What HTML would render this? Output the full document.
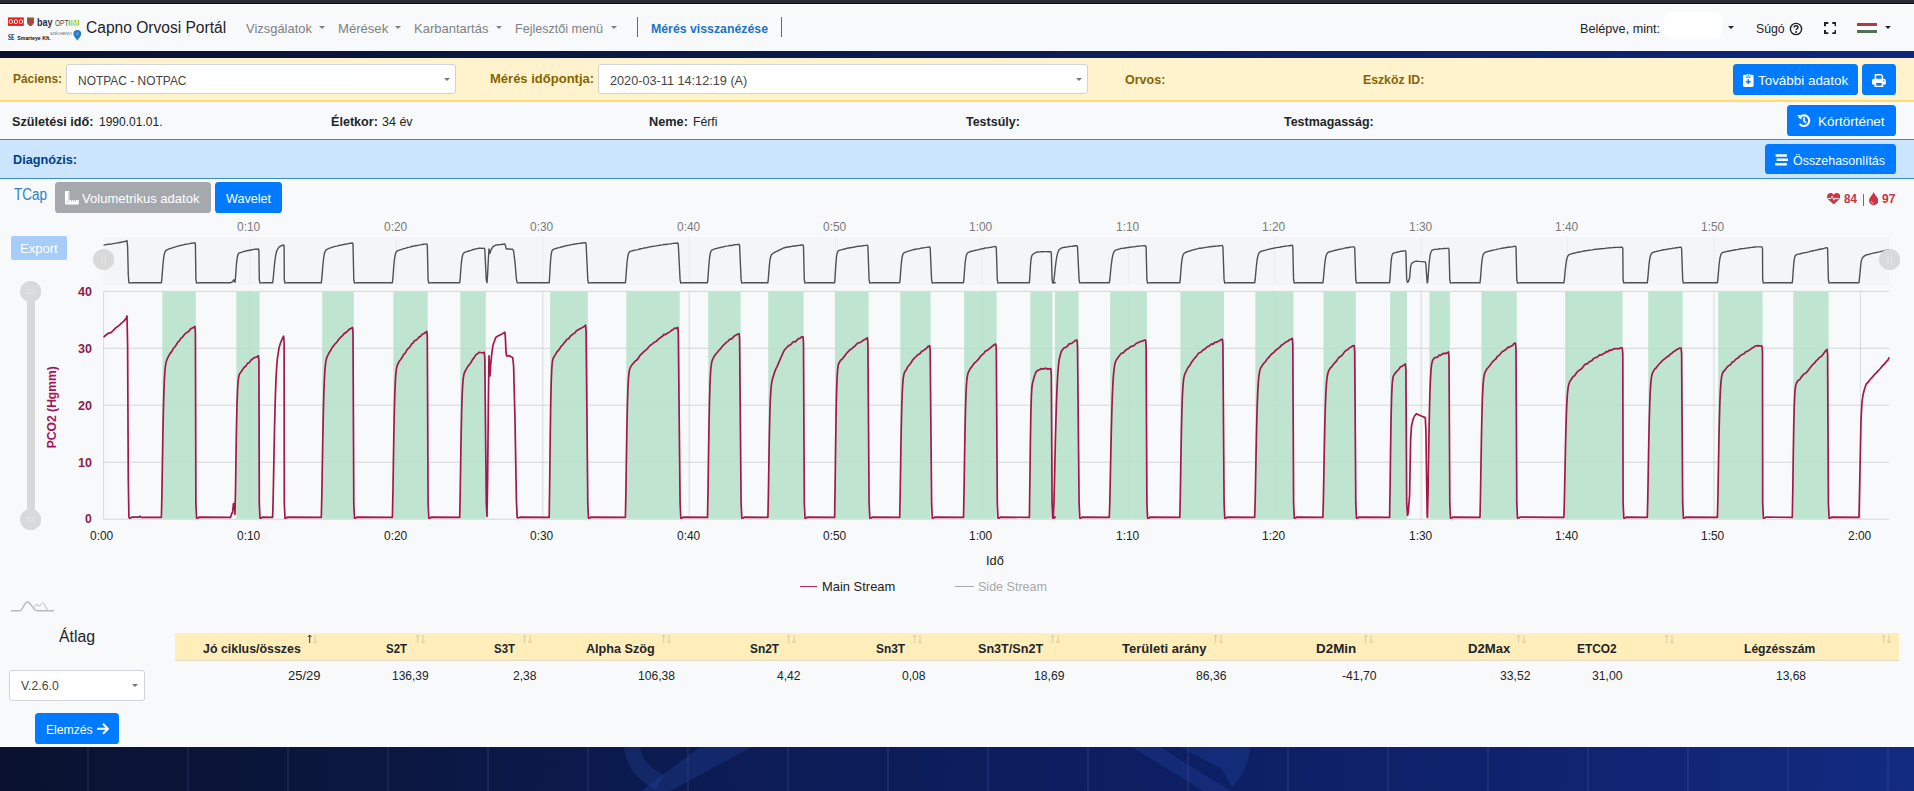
<!DOCTYPE html>
<html lang="hu">
<head>
<meta charset="utf-8">
<title>Capno Orvosi Portál</title>
<style>
*{box-sizing:border-box;margin:0;padding:0}
html,body{width:1914px;height:791px;overflow:hidden}
body{font-family:"Liberation Sans",sans-serif;background:#0d1f5c;position:relative;color:#212529;font-size:13px}
.abs{position:absolute;white-space:nowrap}
.t{position:absolute;white-space:nowrap;line-height:1;transform-origin:0 0}
b,.b{font-weight:bold}
#topbar{left:0;top:0;width:1914px;height:4px;background:linear-gradient(#2b2b36 0,#2b2b36 70%,#05050a 78%,#05050a 100%)}
#nav{left:0;top:4px;width:1914px;height:47px;background:#f8f9fa;border-top:1px solid #fff}
#darkband{left:0;top:51px;width:1914px;height:6.6px;background:linear-gradient(90deg,#0a1230 0%,#0b1740 30%,#0d1f5c 65%,#10267a 100%)}
#yel{left:0;top:57.6px;width:1914px;height:44.2px;background:#fff3cd;border-bottom:2.4px solid #ffdc73}
#info{left:0;top:101.8px;width:1914px;height:37px;background:#f8f9fa}
#blue{left:0;top:139px;width:1914px;height:40px;background:#cce5ff;border-top:1px solid #3d8fb5;border-bottom:1px solid #3d8fb5}
#main{left:0;top:179px;width:1914px;height:568px;background:#f8f9fa}
#foot{left:0;top:746.7px;width:1914px;height:44.3px;background:linear-gradient(90deg,#0a1230 0%,#0b1740 20%,#0c1c56 40%,#0d1f62 60%,#0f236e 80%,#122a80 100%);overflow:hidden}
.btn{position:absolute;background:#007bff;color:#fff;border-radius:3.6px;white-space:nowrap}
.sel{position:absolute;background:#fff;border:1px solid #ced4da;border-radius:3px}
.caret{position:absolute;width:0;height:0;border-left:3px solid transparent;border-right:3px solid transparent;border-top:3.5px solid #777}
</style>
</head>
<body>
<div class="abs" id="topbar"></div>
<div class="abs" id="nav"></div>
<div class="abs" id="darkband"></div>
<div class="abs" id="yel"></div>
<div class="abs" id="info"></div>
<div class="abs" id="blue"></div>
<div class="abs" id="main"></div>
<div class="abs" id="foot"><svg width="1914" height="45" viewBox="0 0 1914 45">
<g stroke="#8fa0e0" stroke-opacity=".13" stroke-width="1.6"><path d="M88 0V45"/><path d="M188 0V45"/><path d="M288 0V45"/><path d="M388 0V45"/><path d="M488 0V45"/><path d="M588 0V45"/><path d="M688 0V45"/><path d="M788 0V45"/><path d="M888 0V45"/><path d="M988 0V45"/><path d="M1088 0V45"/><path d="M1188 0V45"/><path d="M1288 0V45"/><path d="M1388 0V45"/><path d="M1488 0V45"/><path d="M1588 0V45"/><path d="M1688 0V45"/><path d="M1788 0V45"/><path d="M1888 0V45"/></g>
<g fill="#2a55c0" fill-opacity=".22"><path d="M700 0H752L668 45H640Z"/><path d="M624 0H640C642 12 650 22 664 28L656 42C636 34 626 18 624 0Z"/>
<path d="M1132 0H1160L1232 45H1205Z"/><path d="M1180 0H1250C1250 12 1244 28 1232 40L1222 22C1210 16 1196 8 1180 0Z"/></g>
</svg></div>
<svg class="abs" style="left:0;top:0" width="1914" height="791" viewBox="0 0 1914 791">
<rect x="103.6" y="237" width="1785.4" height="48" fill="#f4f5f7"/>
<line x1="103.6" x2="1889" y1="291.3" y2="291.3" stroke="#000" stroke-opacity="0.14" stroke-width="1"/>
<line x1="103.6" x2="1889" y1="348.3" y2="348.3" stroke="#000" stroke-opacity="0.14" stroke-width="1"/>
<line x1="103.6" x2="1889" y1="405.2" y2="405.2" stroke="#000" stroke-opacity="0.14" stroke-width="1"/>
<line x1="103.6" x2="1889" y1="462.2" y2="462.2" stroke="#000" stroke-opacity="0.14" stroke-width="1"/>
<line x1="103.6" x2="1889" y1="519.2" y2="519.2" stroke="#000" stroke-opacity="0.14" stroke-width="1"/>
<line x1="103.6" x2="103.6" y1="291.3" y2="519.2" stroke="#000" stroke-opacity="0.12" stroke-width="1"/>
<line x1="250.0" x2="250.0" y1="291.3" y2="519.2" stroke="#000" stroke-opacity="0.12" stroke-width="1"/>
<line x1="250.0" x2="250.0" y1="237" y2="284.5" stroke="#000" stroke-opacity="0.04" stroke-width="1"/>
<line x1="396.4" x2="396.4" y1="291.3" y2="519.2" stroke="#000" stroke-opacity="0.12" stroke-width="1"/>
<line x1="396.4" x2="396.4" y1="237" y2="284.5" stroke="#000" stroke-opacity="0.04" stroke-width="1"/>
<line x1="542.8" x2="542.8" y1="291.3" y2="519.2" stroke="#000" stroke-opacity="0.12" stroke-width="1"/>
<line x1="542.8" x2="542.8" y1="237" y2="284.5" stroke="#000" stroke-opacity="0.04" stroke-width="1"/>
<line x1="689.2" x2="689.2" y1="291.3" y2="519.2" stroke="#000" stroke-opacity="0.12" stroke-width="1"/>
<line x1="689.2" x2="689.2" y1="237" y2="284.5" stroke="#000" stroke-opacity="0.04" stroke-width="1"/>
<line x1="835.6" x2="835.6" y1="291.3" y2="519.2" stroke="#000" stroke-opacity="0.12" stroke-width="1"/>
<line x1="835.6" x2="835.6" y1="237" y2="284.5" stroke="#000" stroke-opacity="0.04" stroke-width="1"/>
<line x1="982.0" x2="982.0" y1="291.3" y2="519.2" stroke="#000" stroke-opacity="0.12" stroke-width="1"/>
<line x1="982.0" x2="982.0" y1="237" y2="284.5" stroke="#000" stroke-opacity="0.04" stroke-width="1"/>
<line x1="1128.4" x2="1128.4" y1="291.3" y2="519.2" stroke="#000" stroke-opacity="0.12" stroke-width="1"/>
<line x1="1128.4" x2="1128.4" y1="237" y2="284.5" stroke="#000" stroke-opacity="0.04" stroke-width="1"/>
<line x1="1274.8" x2="1274.8" y1="291.3" y2="519.2" stroke="#000" stroke-opacity="0.12" stroke-width="1"/>
<line x1="1274.8" x2="1274.8" y1="237" y2="284.5" stroke="#000" stroke-opacity="0.04" stroke-width="1"/>
<line x1="1421.2" x2="1421.2" y1="291.3" y2="519.2" stroke="#000" stroke-opacity="0.12" stroke-width="1"/>
<line x1="1421.2" x2="1421.2" y1="237" y2="284.5" stroke="#000" stroke-opacity="0.04" stroke-width="1"/>
<line x1="1567.6" x2="1567.6" y1="291.3" y2="519.2" stroke="#000" stroke-opacity="0.12" stroke-width="1"/>
<line x1="1567.6" x2="1567.6" y1="237" y2="284.5" stroke="#000" stroke-opacity="0.04" stroke-width="1"/>
<line x1="1714.0" x2="1714.0" y1="291.3" y2="519.2" stroke="#000" stroke-opacity="0.12" stroke-width="1"/>
<line x1="1714.0" x2="1714.0" y1="237" y2="284.5" stroke="#000" stroke-opacity="0.04" stroke-width="1"/>
<line x1="1860.4" x2="1860.4" y1="291.3" y2="519.2" stroke="#000" stroke-opacity="0.12" stroke-width="1"/>
<rect x="162.3" y="291.8" width="33.5" height="227" fill="#b6e2ca" fill-opacity=".86"/>
<rect x="236.3" y="291.8" width="23.3" height="227" fill="#b6e2ca" fill-opacity=".86"/>
<rect x="322.2" y="291.8" width="31.6" height="227" fill="#b6e2ca" fill-opacity=".86"/>
<rect x="393.3" y="291.8" width="34.4" height="227" fill="#b6e2ca" fill-opacity=".86"/>
<rect x="460.3" y="291.8" width="25.6" height="227" fill="#b6e2ca" fill-opacity=".86"/>
<rect x="550.2" y="291.8" width="37.6" height="227" fill="#b6e2ca" fill-opacity=".86"/>
<rect x="626.3" y="291.8" width="53.4" height="227" fill="#b6e2ca" fill-opacity=".86"/>
<rect x="708.2" y="291.8" width="32.5" height="227" fill="#b6e2ca" fill-opacity=".86"/>
<rect x="768.2" y="291.8" width="35.4" height="227" fill="#b6e2ca" fill-opacity=".86"/>
<rect x="835.2" y="291.8" width="33.5" height="227" fill="#b6e2ca" fill-opacity=".86"/>
<rect x="900.3" y="291.8" width="30.3" height="227" fill="#b6e2ca" fill-opacity=".86"/>
<rect x="964.1" y="291.8" width="32.5" height="227" fill="#b6e2ca" fill-opacity=".86"/>
<rect x="1030.3" y="291.8" width="22.1" height="227" fill="#b6e2ca" fill-opacity=".86"/>
<rect x="1055.0" y="291.8" width="23.6" height="227" fill="#b6e2ca" fill-opacity=".86"/>
<rect x="1110.2" y="291.8" width="36.7" height="227" fill="#b6e2ca" fill-opacity=".86"/>
<rect x="1180.4" y="291.8" width="43.6" height="227" fill="#b6e2ca" fill-opacity=".86"/>
<rect x="1255.3" y="291.8" width="38.2" height="227" fill="#b6e2ca" fill-opacity=".86"/>
<rect x="1323.5" y="291.8" width="32.3" height="227" fill="#b6e2ca" fill-opacity=".86"/>
<rect x="1390.2" y="291.8" width="16.8" height="227" fill="#b6e2ca" fill-opacity=".86"/>
<rect x="1429.4" y="291.8" width="20.5" height="227" fill="#b6e2ca" fill-opacity=".86"/>
<rect x="1481.4" y="291.8" width="35.4" height="227" fill="#b6e2ca" fill-opacity=".86"/>
<rect x="1565.1" y="291.8" width="57.5" height="227" fill="#b6e2ca" fill-opacity=".86"/>
<rect x="1648.2" y="291.8" width="34.5" height="227" fill="#b6e2ca" fill-opacity=".86"/>
<rect x="1718.1" y="291.8" width="44.5" height="227" fill="#b6e2ca" fill-opacity=".86"/>
<rect x="1793.3" y="291.8" width="35.4" height="227" fill="#b6e2ca" fill-opacity=".86"/>
<path d="M103.6 245.1L106.0 244.6L108.5 244.2L111.0 244.1L113.5 243.6L116.0 243.1L118.5 242.7L121.0 242.2L123.5 241.8L126.0 241.2L127.0 240.6L127.6 246.7L128.3 275.0L128.9 282.7L129.6 283.0L131.0 282.9L132.0 282.8L139.0 282.8L140.0 282.6L141.0 282.8L161.4 282.8L161.9 278.3L162.4 271.6L162.9 265.3L163.4 260.2L163.9 256.4L164.4 253.9L164.9 252.2L165.4 251.2L165.9 250.5L166.4 250.1L166.9 249.8L168.6 249.1L170.1 248.5L171.7 248.1L173.2 247.5L174.8 247.1L176.3 246.6L177.8 246.1L179.4 245.8L180.9 245.3L182.5 245.1L184.1 244.6L185.6 244.3L187.2 244.1L188.7 243.9L190.2 243.4L191.8 243.2L193.3 243.1L194.9 242.8L195.4 244.1L195.9 279.9L196.6 283.0L198.0 282.9L199.0 282.8L230.5 282.8L231.8 282.0L232.6 281.8L233.4 280.0L233.8 281.1L234.4 279.9L235.0 282.2L235.5 277.5L236.0 270.2L236.5 263.8L237.0 259.2L237.5 256.3L238.0 254.6L238.5 253.6L239.0 253.1L239.5 252.8L241.3 252.3L242.8 251.8L244.4 251.3L245.9 251.1L247.5 250.5L249.0 250.5L250.6 250.0L252.2 249.7L253.7 249.4L255.3 249.3L256.8 249.2L258.4 249.0L258.9 250.2L259.3 279.9L260.0 283.0L261.4 282.9L262.4 282.8L272.6 282.8L273.1 279.5L273.6 274.1L274.1 268.5L274.6 263.5L275.1 259.3L275.6 255.9L276.1 253.4L276.6 251.6L277.1 250.2L277.6 249.2L279.1 247.2L280.6 246.2L282.1 245.5L283.6 244.9L284.1 246.1L284.3 279.9L285.0 283.0L286.4 282.9L287.4 282.8L321.3 282.8L321.8 278.7L322.3 272.4L322.8 266.2L323.3 261.0L323.8 257.0L324.3 254.2L324.8 252.3L325.3 251.1L325.8 250.3L326.3 249.7L326.8 249.3L327.3 249.1L328.9 248.4L330.4 247.9L332.0 247.3L333.6 246.8L335.2 246.4L336.8 246.1L338.3 245.7L339.9 245.2L341.5 245.0L343.1 244.6L344.6 244.2L346.2 244.1L347.8 243.8L349.4 243.4L350.9 243.2L352.5 243.0L353.0 244.3L353.8 279.9L354.5 283.0L355.9 282.9L356.9 282.8L392.4 282.8L392.9 278.1L393.4 271.2L393.9 264.8L394.4 259.8L394.9 256.3L395.4 254.1L395.9 252.6L396.4 251.8L396.9 251.2L397.4 250.9L399.2 250.1L400.8 249.7L402.3 249.2L403.8 248.6L405.4 248.4L406.9 247.7L408.4 247.4L410.0 247.1L411.5 246.5L413.0 246.3L414.5 245.8L416.1 245.7L417.6 245.4L419.1 245.1L420.7 244.9L422.2 244.5L423.7 244.3L425.3 244.1L426.8 243.9L427.3 245.1L428.1 279.9L428.8 283.0L430.2 282.9L431.2 282.8L459.7 282.8L460.2 278.0L460.7 271.0L461.2 264.8L461.7 260.1L462.2 257.0L462.7 255.0L463.2 253.8L463.7 253.1L464.2 252.7L464.7 252.4L466.3 251.8L467.9 251.2L469.5 250.8L471.1 250.3L472.6 249.7L474.2 249.3L475.8 248.8L477.4 248.6L479.0 248.2L480.8 248.3L482.5 248.4L484.3 248.2L484.8 249.5L486.3 279.9L487.0 282.6L487.6 275.0L488.4 258.2L489.0 249.0L489.5 251.5L490.0 253.2L490.6 251.1L491.5 249.0L493.0 246.7L495.7 245.1L498.0 244.8L501.0 244.5L504.8 244.0L505.4 245.2L506.0 248.2L506.6 249.0L509.0 248.9L511.0 249.2L512.7 249.3L513.6 251.1L515.0 262.4L516.4 279.2L517.2 282.9L518.5 282.9L520.0 282.8L549.2 282.8L549.7 275.7L550.2 266.5L550.7 259.2L551.2 254.5L551.7 251.9L552.2 250.5L552.7 249.8L553.2 249.5L554.8 248.9L556.4 248.3L557.9 247.9L559.5 247.6L561.0 247.0L562.5 246.7L564.1 246.3L565.6 245.9L567.1 245.5L568.7 245.4L570.2 244.9L571.8 244.6L573.3 244.3L574.8 244.2L576.4 243.7L577.9 243.6L579.4 243.4L581.0 243.2L582.5 243.0L584.1 242.8L585.6 242.6L586.1 243.8L587.8 279.9L588.5 283.0L589.9 282.9L590.9 282.8L625.4 282.8L625.9 277.7L626.4 270.5L626.9 264.0L627.4 259.2L627.9 255.9L628.4 253.9L628.9 252.7L629.4 252.0L629.9 251.6L630.4 251.4L631.9 250.9L633.5 250.5L635.0 250.1L636.5 249.9L638.0 249.6L639.6 249.0L641.1 248.7L642.6 248.4L644.2 248.0L645.7 247.8L647.2 247.5L648.7 247.1L650.3 246.7L651.8 246.6L653.3 246.3L654.9 246.1L656.4 245.9L657.9 245.6L659.5 245.3L661.0 245.1L662.5 244.9L664.0 244.5L665.6 244.5L667.1 244.3L668.6 244.1L670.2 243.9L671.7 243.6L673.2 243.4L674.7 243.2L676.3 243.2L677.8 243.0L678.3 244.3L680.1 279.9L680.8 283.0L682.2 282.9L683.2 282.8L707.5 282.8L708.0 277.6L708.5 270.2L709.0 263.4L709.5 258.3L710.0 254.8L710.5 252.6L711.0 251.3L711.5 250.5L712.0 250.1L712.5 249.8L714.2 249.1L715.7 248.6L717.3 248.3L718.8 247.9L720.4 247.5L722.0 247.1L723.5 246.7L725.1 246.4L726.6 246.1L728.2 245.9L729.7 245.5L731.3 245.5L732.9 245.2L734.4 244.8L736.0 244.6L737.5 244.5L739.1 244.3L739.6 245.6L741.1 279.9L741.8 283.0L743.2 282.9L744.2 282.8L767.9 282.8L768.4 277.9L768.9 271.1L769.4 265.1L769.9 260.7L770.4 257.8L770.9 256.1L771.4 255.0L771.9 254.3L772.4 253.9L774.1 252.7L775.6 251.8L777.1 251.2L778.6 250.5L780.2 249.7L781.7 249.0L783.2 248.2L784.7 247.7L786.2 247.3L787.7 247.0L789.3 246.8L790.8 246.7L792.3 246.2L793.8 246.0L795.4 246.0L796.9 245.7L798.4 245.4L799.9 245.3L801.5 245.0L803.0 245.0L803.5 246.3L804.3 279.9L805.0 283.0L806.4 282.9L807.4 282.8L834.6 282.8L835.1 276.6L835.6 268.1L836.1 261.1L836.6 256.3L837.1 253.5L837.6 251.9L838.1 251.1L838.6 250.6L840.6 249.9L842.2 249.7L843.7 249.2L845.3 248.8L846.9 248.3L848.5 248.0L850.0 247.7L851.6 247.5L853.2 247.2L854.8 247.0L856.4 246.6L857.9 246.3L859.5 246.2L861.1 246.1L862.7 245.8L864.2 245.6L865.8 245.4L867.4 245.2L867.9 246.5L869.1 279.9L869.8 283.0L871.2 282.9L872.2 282.8L899.7 282.8L900.2 277.9L900.7 271.0L901.2 264.7L901.7 260.1L902.2 256.9L902.7 254.9L903.2 253.8L903.7 253.1L904.2 252.7L904.7 252.4L906.3 251.9L907.8 251.3L909.4 250.9L911.0 250.4L912.5 249.9L914.1 249.5L915.6 249.2L917.2 248.9L918.8 248.7L920.3 248.4L921.9 248.0L923.5 247.9L925.0 247.6L926.6 247.4L928.1 247.0L929.7 246.9L930.2 248.1L931.6 279.9L932.3 283.0L933.7 282.9L934.7 282.8L963.5 282.8L964.0 277.9L964.5 271.0L965.0 264.7L965.5 260.0L966.0 256.9L966.5 254.9L967.0 253.7L967.5 253.1L968.0 252.6L968.5 252.4L970.0 251.7L971.5 251.3L973.0 250.9L974.6 250.5L976.1 250.2L977.6 249.9L979.1 249.5L980.6 249.1L982.1 248.8L983.7 248.5L985.2 248.0L986.7 247.9L988.2 247.7L989.7 247.4L991.2 247.2L992.8 246.9L994.3 246.6L995.8 246.5L996.3 247.8L997.3 279.9L998.0 283.0L999.4 282.9L1000.4 282.8L1029.4 282.8L1029.9 275.5L1030.4 266.7L1030.9 260.6L1031.4 257.3L1031.9 255.6L1032.4 254.8L1034.4 253.3L1036.0 252.4L1037.8 252.0L1039.6 251.9L1041.4 251.6L1043.0 251.8L1044.5 251.6L1046.1 251.6L1047.7 251.8L1049.2 251.7L1050.8 251.6L1051.3 252.9L1052.1 279.9L1052.8 283.0L1054.2 282.9L1055.2 282.8L1053.4 282.8L1053.9 280.2L1054.4 275.9L1054.9 271.2L1055.4 266.7L1055.9 262.6L1056.4 259.2L1056.9 256.3L1057.4 254.1L1057.9 252.4L1058.4 251.2L1058.9 250.2L1059.4 249.5L1061.3 248.1L1062.8 247.6L1064.4 247.3L1066.0 247.2L1067.6 246.9L1069.1 246.5L1070.7 246.4L1072.3 246.3L1073.9 246.0L1075.4 245.7L1077.0 245.7L1077.5 246.9L1079.1 279.9L1079.8 283.0L1081.2 282.9L1082.2 282.8L1109.3 282.8L1109.8 279.7L1110.3 274.7L1110.8 269.5L1111.3 264.8L1111.8 260.8L1112.3 257.6L1112.8 255.2L1113.3 253.5L1113.8 252.3L1114.3 251.4L1114.8 250.8L1115.3 250.4L1115.8 250.1L1116.3 249.9L1118.2 249.3L1119.9 248.8L1121.5 248.4L1123.2 248.4L1124.8 248.0L1126.5 247.7L1128.1 247.5L1129.8 247.2L1131.4 247.0L1133.0 246.9L1134.5 246.7L1136.1 246.4L1137.7 246.2L1139.3 246.1L1140.9 245.9L1142.4 245.9L1144.0 245.7L1145.6 245.7L1146.1 246.9L1146.9 279.9L1147.6 283.0L1149.0 282.9L1150.0 282.8L1179.8 282.8L1180.3 278.3L1180.8 271.8L1181.3 265.7L1181.8 261.1L1182.3 257.9L1182.8 255.8L1183.3 254.5L1183.8 253.7L1184.3 253.2L1184.8 252.8L1186.6 252.0L1188.2 251.4L1189.8 251.0L1191.4 250.4L1193.0 249.9L1194.6 249.5L1196.2 249.1L1197.8 248.6L1199.4 248.3L1200.9 248.2L1202.5 247.9L1204.0 247.7L1205.5 247.4L1207.1 247.1L1208.6 247.0L1210.1 246.7L1211.7 246.5L1213.2 246.5L1214.7 246.2L1216.3 246.1L1217.8 246.0L1219.3 245.8L1220.9 245.6L1222.4 245.5L1222.9 246.8L1224.1 279.9L1224.8 283.0L1226.2 282.9L1227.2 282.8L1254.7 282.8L1255.2 279.2L1255.7 273.6L1256.2 268.0L1256.7 263.2L1257.2 259.5L1257.7 256.8L1258.2 254.9L1258.7 253.6L1259.2 252.7L1259.7 252.2L1260.2 251.8L1260.7 251.5L1262.6 250.9L1264.1 250.5L1265.7 250.1L1267.3 249.6L1268.8 249.3L1270.4 248.9L1272.0 248.5L1273.5 248.3L1275.1 247.9L1276.7 247.6L1278.2 247.4L1279.8 247.2L1281.3 246.8L1282.9 246.6L1284.5 246.3L1286.0 246.1L1287.6 245.9L1289.2 245.7L1290.7 245.5L1292.3 245.3L1292.8 246.6L1293.6 279.9L1294.3 283.0L1295.7 282.9L1296.7 282.8L1322.9 282.8L1323.4 279.0L1323.9 273.2L1324.4 267.6L1324.9 262.9L1325.4 259.2L1325.9 256.7L1326.4 255.0L1326.9 253.8L1327.4 253.1L1327.9 252.6L1328.4 252.3L1328.9 252.0L1330.5 251.5L1332.1 251.2L1333.6 250.7L1335.2 250.3L1336.8 250.0L1338.4 249.4L1340.0 249.2L1341.6 248.9L1343.1 248.6L1344.7 248.1L1346.3 247.8L1347.9 247.7L1349.5 247.3L1351.0 247.1L1352.6 246.9L1354.2 246.9L1354.7 248.1L1355.8 279.9L1356.5 283.0L1357.9 282.9L1358.9 282.8L1389.6 282.8L1390.1 276.5L1390.6 268.3L1391.1 261.8L1391.6 257.6L1392.1 255.3L1392.6 254.0L1393.1 253.4L1393.6 253.1L1395.4 252.6L1397.0 252.2L1398.7 251.8L1400.4 251.3L1402.1 251.2L1403.7 250.9L1405.4 250.7L1405.9 251.9L1406.7 279.9L1407.5 282.4L1408.3 281.7L1409.6 278.1L1410.6 266.6L1411.5 263.7L1413.0 262.3L1414.5 261.6L1416.4 261.1L1419.0 261.4L1422.0 261.6L1425.3 261.9L1425.9 264.5L1426.6 275.0L1427.2 282.6L1427.5 282.8L1428.0 278.3L1428.5 271.5L1429.0 265.1L1429.5 260.0L1430.0 256.2L1430.5 253.6L1431.0 252.0L1431.5 251.0L1432.0 250.4L1432.5 250.0L1433.0 249.8L1434.7 249.3L1436.3 249.4L1437.8 249.2L1439.3 248.8L1440.8 248.9L1442.4 248.6L1443.9 248.5L1445.4 248.5L1447.0 248.4L1448.5 248.2L1449.0 249.4L1449.8 279.9L1450.5 283.0L1451.9 282.9L1452.9 282.8L1480.0 282.8L1480.5 278.2L1481.0 271.5L1481.5 265.4L1482.0 260.6L1482.5 257.4L1483.0 255.3L1483.5 254.0L1484.0 253.2L1484.5 252.8L1485.0 252.5L1486.7 251.8L1488.2 251.4L1489.7 251.0L1491.3 250.6L1492.8 250.2L1494.3 249.9L1495.8 249.6L1497.3 249.1L1498.8 248.9L1500.3 248.6L1501.9 248.2L1503.4 248.0L1504.9 247.8L1506.4 247.5L1507.9 247.2L1509.4 247.2L1511.0 246.9L1512.5 246.8L1514.0 246.4L1515.5 246.3L1516.0 247.6L1516.8 279.9L1517.5 283.0L1518.9 282.9L1519.9 282.8L1563.9 282.8L1564.4 279.3L1564.9 273.9L1565.4 268.7L1565.9 264.3L1566.4 261.0L1566.9 258.6L1567.4 257.0L1567.9 256.0L1568.4 255.3L1568.9 254.9L1569.4 254.6L1569.9 254.4L1571.5 253.8L1573.1 253.3L1574.6 253.2L1576.2 252.6L1577.8 252.2L1579.3 252.0L1580.9 251.8L1582.5 251.4L1584.1 251.0L1585.7 250.7L1587.2 250.6L1588.8 250.3L1590.4 250.1L1592.0 249.9L1593.5 249.6L1595.1 249.3L1596.7 249.3L1598.3 249.1L1599.9 248.8L1601.4 248.8L1603.0 248.6L1604.6 248.5L1606.2 248.1L1607.8 248.1L1609.4 247.8L1610.9 247.9L1612.5 247.6L1614.1 247.5L1615.7 247.4L1617.4 247.4L1619.0 247.5L1620.7 247.3L1622.3 247.3L1622.8 248.6L1623.1 279.9L1623.8 283.0L1625.2 282.9L1626.2 282.8L1647.3 282.8L1647.8 278.7L1648.3 272.6L1648.8 266.8L1649.3 262.1L1649.8 258.6L1650.3 256.2L1650.8 254.7L1651.3 253.7L1651.8 253.1L1652.3 252.7L1652.8 252.5L1654.6 251.8L1656.1 251.5L1657.7 251.1L1659.2 250.7L1660.8 250.4L1662.4 250.0L1663.9 249.7L1665.5 249.5L1667.0 249.2L1668.6 249.0L1670.2 248.6L1671.7 248.5L1673.3 248.1L1674.9 248.0L1676.4 247.7L1678.0 247.6L1679.5 247.3L1681.1 247.3L1681.6 248.6L1682.7 279.9L1683.4 283.0L1684.8 282.9L1685.8 282.8L1717.4 282.8L1717.9 278.7L1718.4 272.6L1718.9 266.8L1719.4 262.0L1719.9 258.5L1720.4 256.2L1720.9 254.6L1721.4 253.7L1721.9 253.1L1722.4 252.7L1722.9 252.4L1724.6 252.0L1726.1 251.6L1727.6 251.2L1729.2 251.0L1730.7 250.8L1732.2 250.3L1733.7 250.2L1735.2 249.8L1736.7 249.6L1738.2 249.4L1739.7 249.0L1741.3 248.8L1742.8 248.6L1744.3 248.5L1745.8 248.1L1747.3 248.1L1748.8 247.8L1750.3 247.6L1751.8 247.4L1753.4 247.2L1754.9 247.0L1756.4 246.9L1757.9 246.9L1762.0 246.9L1762.5 248.2L1762.7 279.9L1763.4 283.0L1764.8 282.9L1765.8 282.8L1792.3 282.8L1792.8 277.0L1793.3 269.4L1793.8 263.2L1794.3 259.2L1794.8 256.9L1795.3 255.7L1795.8 255.1L1796.3 254.8L1798.0 254.1L1799.6 254.0L1801.1 253.5L1802.6 253.1L1804.2 252.7L1805.7 252.6L1807.2 252.3L1808.7 251.9L1810.3 251.4L1811.8 251.0L1813.3 250.7L1814.9 250.4L1816.4 250.0L1817.9 249.7L1819.4 249.3L1821.0 249.2L1822.5 248.8L1824.0 248.4L1825.6 247.9L1827.1 247.6L1827.6 248.9L1828.4 279.9L1829.1 283.0L1830.5 282.9L1831.5 282.8L1859.0 282.8L1860.0 272.9L1861.0 262.4L1862.0 258.6L1863.1 257.1L1864.5 255.9L1866.3 254.8L1868.3 254.5L1870.3 253.9L1872.3 253.4L1874.3 252.9L1876.3 252.5L1878.3 252.1L1880.3 251.6L1882.3 251.1L1884.3 250.7L1886.3 250.2L1888.3 249.8L1889.0 249.3" fill="none" stroke="#505050" stroke-width="1.4" stroke-linejoin="round"/>
<path d="M103.6 337.2L106.0 335.0L108.5 333.2L111.0 332.6L113.5 330.2L116.0 327.6L118.5 326.0L121.0 323.6L123.5 321.4L126.0 318.6L127.0 316.0L127.6 345.0L128.3 480.0L128.9 517.0L129.6 518.2L131.0 517.6L132.0 517.2L139.0 517.2L140.0 516.2L141.0 517.3L161.4 517.4L161.9 495.9L162.4 464.1L162.9 433.8L163.4 409.3L163.9 391.4L164.4 379.3L164.9 371.4L165.4 366.4L165.9 363.3L166.4 361.2L166.9 359.7L168.6 356.2L170.1 353.4L171.7 351.7L173.2 348.6L174.8 347.0L176.3 344.7L177.8 342.2L179.4 340.9L180.9 338.3L182.5 337.1L184.1 334.9L185.6 333.4L187.2 332.3L188.7 331.5L190.2 329.2L191.8 328.2L193.3 327.6L194.9 326.5L195.4 332.5L195.9 503.4L196.6 518.2L198.0 518.0L199.0 517.1L230.5 517.4L231.8 513.4L232.6 512.4L233.4 503.9L233.8 509.4L234.4 503.4L235.0 514.4L235.5 492.1L236.0 456.9L236.5 426.6L237.0 404.8L237.5 390.9L238.0 382.7L238.5 378.1L239.0 375.5L239.5 373.9L241.3 371.6L242.8 369.2L244.4 367.1L245.9 366.2L247.5 363.3L249.0 362.9L250.6 360.7L252.2 359.2L253.7 358.0L255.3 357.3L256.8 357.0L258.4 355.8L258.9 361.8L259.3 503.4L260.0 518.2L261.4 518.0L262.4 517.1L272.6 517.4L273.1 501.3L273.6 475.7L274.1 449.1L274.6 425.0L275.1 404.9L275.6 389.1L276.1 377.1L276.6 368.3L277.1 361.8L277.6 356.9L279.1 347.5L280.6 342.8L282.1 339.1L283.6 336.2L284.1 342.2L284.3 503.4L285.0 518.2L286.4 518.0L287.4 517.1L321.3 517.4L321.8 497.5L322.3 467.4L322.8 437.9L323.3 413.2L323.8 394.3L324.3 380.9L324.8 371.8L325.3 365.8L325.8 361.9L326.3 359.4L326.8 357.6L327.3 356.3L328.9 353.1L330.4 350.9L332.0 347.9L333.6 345.7L335.2 343.7L336.8 342.3L338.3 340.0L339.9 338.0L341.5 336.7L343.1 334.9L344.6 333.1L346.2 332.4L347.8 330.9L349.4 329.1L350.9 328.5L352.5 327.4L353.0 333.4L353.8 503.4L354.5 518.2L355.9 518.0L356.9 517.1L392.4 517.4L392.9 494.8L393.4 461.9L393.9 431.5L394.4 407.7L394.9 391.0L395.4 380.1L395.9 373.3L396.4 369.2L396.9 366.6L397.4 364.9L399.2 361.3L400.8 359.5L402.3 357.0L403.8 354.2L405.4 353.0L406.9 349.8L408.4 348.3L410.0 346.9L411.5 344.2L413.0 343.0L414.5 340.7L416.1 340.1L417.6 338.8L419.1 337.1L420.7 336.2L422.2 334.3L423.7 333.7L425.3 332.5L426.8 331.5L427.3 337.5L428.1 503.4L428.8 518.2L430.2 518.0L431.2 517.1L459.7 517.4L460.2 494.3L460.7 461.2L461.2 431.5L461.7 409.2L462.2 394.1L462.7 384.6L463.2 378.9L463.7 375.6L464.2 373.5L464.7 372.0L466.3 369.1L467.9 366.4L469.5 364.5L471.1 362.3L472.6 359.4L474.2 357.6L475.8 354.8L477.4 354.0L479.0 352.3L480.8 352.5L482.5 353.0L484.3 352.3L484.8 358.3L486.3 503.4L487.0 516.5L487.6 480.0L488.4 400.0L489.0 355.8L489.5 368.0L490.0 376.0L490.6 366.0L491.5 356.0L493.0 345.0L495.7 337.5L498.0 336.0L501.0 334.6L504.8 332.2L505.4 338.0L506.0 352.0L506.6 356.0L509.0 355.6L511.0 356.8L512.7 357.5L513.6 366.0L515.0 420.0L516.4 500.0L517.2 517.6L518.5 517.8L520.0 517.2L549.2 517.4L549.7 483.6L550.2 439.3L550.7 404.5L551.2 382.2L551.7 369.7L552.2 363.2L552.7 359.9L553.2 358.1L554.8 355.7L556.4 352.8L557.9 350.9L559.5 349.2L561.0 346.4L562.5 345.1L564.1 342.9L565.6 341.1L567.1 339.3L568.7 338.7L570.2 336.3L571.8 335.0L573.3 333.8L574.8 333.1L576.4 330.7L577.9 330.0L579.4 329.0L581.0 328.4L582.5 327.4L584.1 326.5L585.6 325.2L586.1 331.2L587.8 503.4L588.5 518.2L589.9 518.0L590.9 517.1L625.4 517.4L625.9 493.1L626.4 458.5L626.9 427.6L627.4 404.4L627.9 388.9L628.4 379.3L628.9 373.7L629.4 370.5L629.9 368.6L630.4 367.4L631.9 364.8L633.5 363.2L635.0 361.3L636.5 360.3L638.0 358.7L639.6 356.0L641.1 354.4L642.6 352.9L644.2 351.3L645.7 350.2L647.2 348.9L648.7 347.0L650.3 345.2L651.8 344.4L653.3 343.0L654.9 342.0L656.4 341.3L657.9 339.7L659.5 338.3L661.0 337.3L662.5 336.3L664.0 334.4L665.6 334.6L667.1 333.4L668.6 332.6L670.2 331.6L671.7 330.2L673.2 329.4L674.7 328.2L676.3 328.3L677.8 327.4L678.3 333.4L680.1 503.4L680.8 518.2L682.2 518.0L683.2 517.1L707.5 517.4L708.0 492.6L708.5 457.0L709.0 424.9L709.5 400.4L710.0 383.8L710.5 373.3L711.0 367.0L711.5 363.3L712.0 361.1L712.5 359.7L714.2 356.3L715.7 354.2L717.3 352.5L718.8 350.5L720.4 348.9L722.0 346.8L723.5 345.1L725.1 343.7L726.6 342.1L728.2 341.1L729.7 339.2L731.3 339.2L732.9 337.6L734.4 335.9L736.0 335.1L737.5 334.3L739.1 333.7L739.6 339.7L741.1 503.4L741.8 518.2L743.2 518.0L744.2 517.1L767.9 517.4L768.4 494.1L768.9 461.4L769.4 432.8L769.9 411.9L770.4 398.2L770.9 389.7L771.4 384.6L771.9 381.4L772.4 379.2L774.1 373.7L775.6 369.4L777.1 366.7L778.6 363.2L780.2 359.1L781.7 355.9L783.2 352.3L784.7 349.7L786.2 348.0L787.7 346.5L789.3 345.2L790.8 344.8L792.3 342.8L793.8 341.5L795.4 341.8L796.9 340.2L798.4 338.7L799.9 338.4L801.5 336.9L803.0 336.9L803.5 342.9L804.3 503.4L805.0 518.2L806.4 518.0L807.4 517.1L834.6 517.4L835.1 487.5L835.6 447.0L836.1 413.7L836.6 391.0L837.1 377.3L837.6 369.8L838.1 365.8L838.6 363.7L840.6 360.3L842.2 359.1L843.7 357.1L845.3 355.1L846.9 352.9L848.5 351.4L850.0 349.6L851.6 349.0L853.2 347.2L854.8 346.2L856.4 344.3L857.9 343.0L859.5 342.7L861.1 341.9L862.7 340.7L864.2 339.8L865.8 339.0L867.4 337.8L867.9 343.8L869.1 503.4L869.8 518.2L871.2 518.0L872.2 517.1L899.7 517.4L900.2 494.1L900.7 460.9L901.2 431.1L901.7 408.7L902.2 393.7L902.7 384.3L903.2 378.7L903.7 375.4L904.2 373.4L904.7 372.0L906.3 369.7L907.8 366.7L909.4 365.0L911.0 362.7L912.5 360.3L914.1 358.4L915.6 357.0L917.2 355.3L918.8 354.3L920.3 353.2L921.9 351.1L923.5 350.5L925.0 349.3L926.6 348.2L928.1 346.4L929.7 345.7L930.2 351.7L931.6 503.4L932.3 518.2L933.7 518.0L934.7 517.1L963.5 517.4L964.0 494.1L964.5 460.8L965.0 431.0L965.5 408.6L966.0 393.6L966.5 384.2L967.0 378.6L967.5 375.3L968.0 373.4L968.5 372.0L970.0 369.1L971.5 366.9L973.0 364.9L974.6 362.9L976.1 361.6L977.6 360.2L979.1 358.4L980.6 356.2L982.1 354.9L983.7 353.6L985.2 351.2L986.7 350.6L988.2 349.7L989.7 348.3L991.2 347.2L992.8 345.8L994.3 344.5L995.8 344.1L996.3 350.1L997.3 503.4L998.0 518.2L999.4 518.0L1000.4 517.1L1029.4 517.4L1029.9 482.2L1030.4 440.2L1030.9 411.4L1031.4 395.6L1031.9 387.6L1032.4 383.5L1034.4 376.3L1036.0 372.0L1037.8 370.4L1039.6 369.8L1041.4 368.5L1043.0 369.2L1044.5 368.4L1046.1 368.4L1047.7 369.1L1049.2 368.8L1050.8 368.5L1051.3 374.5L1052.1 503.4L1052.8 518.2L1054.2 518.0L1055.2 517.1L1053.4 517.4L1053.9 504.9L1054.4 484.4L1054.9 462.0L1055.4 440.3L1055.9 420.9L1056.4 404.4L1056.9 391.0L1057.4 380.4L1057.9 372.3L1058.4 366.2L1058.9 361.7L1059.4 358.4L1061.3 351.6L1062.8 349.2L1064.4 347.6L1066.0 347.3L1067.6 345.9L1069.1 343.8L1070.7 343.7L1072.3 342.9L1073.9 341.6L1075.4 340.4L1077.0 340.0L1077.5 346.0L1079.1 503.4L1079.8 518.2L1081.2 518.0L1082.2 517.1L1109.3 517.4L1109.8 502.5L1110.3 478.9L1110.8 454.0L1111.3 431.3L1111.8 412.3L1112.3 397.2L1112.8 385.7L1113.3 377.4L1113.8 371.5L1114.3 367.4L1114.8 364.5L1115.3 362.5L1115.8 361.1L1116.3 360.0L1118.2 357.3L1119.9 355.0L1121.5 353.2L1123.2 353.0L1124.8 351.0L1126.5 349.5L1128.1 348.9L1129.8 347.3L1131.4 346.3L1133.0 346.1L1134.5 345.1L1136.1 343.5L1137.7 342.8L1139.3 342.1L1140.9 341.3L1142.4 341.2L1144.0 340.1L1145.6 340.0L1146.1 346.0L1146.9 503.4L1147.6 518.2L1149.0 518.0L1150.0 517.1L1179.8 517.4L1180.3 495.8L1180.8 464.6L1181.3 435.9L1181.8 413.7L1182.3 398.2L1182.8 388.2L1183.3 382.0L1183.8 378.2L1184.3 375.8L1184.8 374.2L1186.6 370.3L1188.2 367.2L1189.8 365.7L1191.4 362.4L1193.0 360.2L1194.6 358.2L1196.2 356.6L1197.8 354.1L1199.4 352.7L1200.9 352.2L1202.5 350.5L1204.0 349.5L1205.5 348.5L1207.1 346.8L1208.6 346.4L1210.1 345.1L1211.7 343.9L1213.2 344.2L1214.7 342.4L1216.3 342.1L1217.8 341.6L1219.3 340.7L1220.9 339.7L1222.4 339.4L1222.9 345.4L1224.1 503.4L1224.8 518.2L1226.2 518.0L1227.2 517.1L1254.7 517.4L1255.2 500.0L1255.7 473.4L1256.2 446.8L1256.7 423.9L1257.2 406.1L1257.7 393.0L1258.2 383.9L1258.7 377.8L1259.2 373.8L1259.7 371.1L1260.2 369.3L1260.7 368.0L1262.6 364.9L1264.1 363.0L1265.7 361.4L1267.3 358.6L1268.8 357.5L1270.4 355.3L1272.0 353.7L1273.5 352.8L1275.1 350.9L1276.7 349.5L1278.2 348.4L1279.8 347.2L1281.3 345.3L1282.9 344.4L1284.5 343.1L1286.0 342.0L1287.6 341.3L1289.2 340.0L1290.7 339.3L1292.3 338.5L1292.8 344.5L1293.6 503.4L1294.3 518.2L1295.7 518.0L1296.7 517.1L1322.9 517.4L1323.4 499.2L1323.9 471.6L1324.4 444.7L1324.9 422.1L1325.4 404.9L1325.9 392.6L1326.4 384.4L1326.9 379.0L1327.4 375.5L1327.9 373.2L1328.4 371.6L1328.9 370.4L1330.5 367.8L1332.1 366.4L1333.6 364.0L1335.2 362.4L1336.8 360.6L1338.4 357.9L1340.0 356.7L1341.6 355.7L1343.1 354.0L1344.7 351.6L1346.3 350.3L1347.9 349.5L1349.5 347.9L1351.0 347.1L1352.6 345.9L1354.2 345.7L1354.7 351.7L1355.8 503.4L1356.5 518.2L1357.9 518.0L1358.9 517.1L1389.6 517.4L1390.1 487.3L1390.6 447.8L1391.1 416.9L1391.6 397.0L1392.1 385.8L1392.6 380.0L1393.1 377.1L1393.6 375.5L1395.4 372.9L1397.0 371.1L1398.7 369.5L1400.4 366.9L1402.1 366.3L1403.7 365.1L1405.4 364.0L1405.9 370.0L1406.7 503.4L1407.5 515.5L1408.3 512.0L1409.6 495.0L1410.6 440.0L1411.5 426.0L1413.0 419.5L1414.5 416.0L1416.4 413.7L1419.0 415.0L1422.0 416.3L1425.3 417.6L1425.9 430.0L1426.6 480.0L1427.2 516.5L1427.5 517.4L1428.0 495.7L1428.5 463.6L1429.0 433.0L1429.5 408.2L1430.0 390.2L1430.5 377.9L1431.0 370.1L1431.5 365.3L1432.0 362.5L1432.5 360.8L1433.0 359.8L1434.7 357.6L1436.3 357.6L1437.8 356.9L1439.3 355.0L1440.8 355.3L1442.4 353.9L1443.9 353.4L1445.4 353.6L1447.0 352.9L1448.5 352.0L1449.0 358.0L1449.8 503.4L1450.5 518.2L1451.9 518.0L1452.9 517.1L1480.0 517.4L1480.5 495.3L1481.0 463.3L1481.5 434.0L1482.0 411.5L1482.5 395.9L1483.0 385.9L1483.5 379.8L1484.0 376.1L1484.5 373.9L1485.0 372.5L1486.7 369.1L1488.2 367.5L1489.7 365.7L1491.3 363.6L1492.8 361.6L1494.3 360.1L1495.8 359.0L1497.3 356.4L1498.8 355.6L1500.3 354.0L1501.9 352.0L1503.4 351.1L1504.9 350.3L1506.4 348.9L1507.9 347.2L1509.4 347.4L1511.0 346.1L1512.5 345.5L1514.0 343.4L1515.5 343.2L1516.0 349.2L1516.8 503.4L1517.5 518.2L1518.9 518.0L1519.9 517.1L1563.9 517.4L1564.4 500.6L1564.9 475.0L1565.4 450.1L1565.9 429.2L1566.4 413.2L1566.9 401.9L1567.4 394.3L1567.9 389.3L1568.4 386.1L1568.9 384.0L1569.4 382.6L1569.9 381.5L1571.5 378.9L1573.1 376.6L1574.6 375.8L1576.2 373.3L1577.8 371.4L1579.3 370.2L1580.9 369.3L1582.5 367.6L1584.1 365.4L1585.7 363.9L1587.2 363.8L1588.8 362.2L1590.4 361.3L1592.0 360.4L1593.5 358.6L1595.1 357.6L1596.7 357.5L1598.3 356.2L1599.9 354.8L1601.4 355.2L1603.0 353.9L1604.6 353.3L1606.2 351.6L1607.8 351.9L1609.4 350.1L1610.9 350.5L1612.5 349.4L1614.1 348.9L1615.7 348.5L1617.4 348.6L1619.0 348.9L1620.7 347.8L1622.3 348.0L1622.8 354.0L1623.1 503.4L1623.8 518.2L1625.2 518.0L1626.2 517.1L1647.3 517.4L1647.8 497.9L1648.3 468.8L1648.8 441.1L1649.3 418.5L1649.8 401.9L1650.3 390.5L1650.8 383.1L1651.3 378.4L1651.8 375.5L1652.3 373.7L1652.8 372.4L1654.6 369.2L1656.1 368.0L1657.7 365.8L1659.2 364.0L1660.8 362.4L1662.4 360.7L1663.9 359.4L1665.5 358.2L1667.0 356.8L1668.6 356.1L1670.2 354.3L1671.7 353.4L1673.3 351.9L1674.9 351.1L1676.4 349.7L1678.0 349.1L1679.5 348.0L1681.1 348.0L1681.6 354.0L1682.7 503.4L1683.4 518.2L1684.8 518.0L1685.8 517.1L1717.4 517.4L1717.9 497.8L1718.4 468.6L1718.9 440.8L1719.4 418.1L1719.9 401.5L1720.4 390.2L1720.9 382.8L1721.4 378.2L1721.9 375.4L1722.4 373.6L1722.9 372.4L1724.6 370.4L1726.1 368.5L1727.6 366.5L1729.2 365.4L1730.7 364.6L1732.2 362.0L1733.7 361.7L1735.2 359.8L1736.7 358.6L1738.2 357.9L1739.7 356.1L1741.3 355.1L1742.8 354.3L1744.3 353.6L1745.8 351.7L1747.3 351.5L1748.8 350.4L1750.3 349.4L1751.8 348.3L1753.4 347.4L1754.9 346.3L1756.4 345.8L1757.9 345.7L1762.0 346.0L1762.5 352.0L1762.7 503.4L1763.4 518.2L1764.8 518.0L1765.8 517.1L1792.3 517.4L1792.8 489.7L1793.3 453.1L1793.8 423.9L1794.3 404.8L1794.8 393.8L1795.3 388.0L1795.8 385.1L1796.3 383.5L1798.0 380.5L1799.6 379.7L1801.1 377.4L1802.6 375.6L1804.2 373.8L1805.7 373.2L1807.2 371.6L1808.7 369.7L1810.3 367.5L1811.8 365.7L1813.3 364.2L1814.9 362.7L1816.4 360.6L1817.9 359.4L1819.4 357.5L1821.0 356.8L1822.5 355.1L1824.0 352.9L1825.6 350.8L1827.1 349.5L1827.6 355.5L1828.4 503.4L1829.1 518.2L1830.5 518.0L1831.5 517.1L1859.0 517.4L1860.0 470.0L1861.0 420.0L1862.0 402.0L1863.1 394.5L1864.5 389.0L1866.3 383.8L1868.3 382.0L1870.3 379.3L1872.3 377.1L1874.3 374.7L1876.3 372.8L1878.3 370.7L1880.3 368.5L1882.3 366.1L1884.3 364.1L1886.3 361.6L1888.3 359.6L1889.0 357.3" fill="none" stroke="#a3174b" stroke-width="1.7" stroke-linejoin="round"/>
</svg>
<div class="sel" style="left:66.4px;top:64.4px;width:389.3px;height:30px"></div><div class="caret" style="left:443.9px;top:78.2px"></div>
<div class="sel" style="left:598.2px;top:64.4px;width:489.4px;height:30px"></div><div class="caret" style="left:1075.8px;top:78.2px"></div>
<div class="sel" style="left:9px;top:670.4px;width:135.6px;height:30.6px"></div><div class="caret" style="left:132.4px;top:683.7px"></div>
<div class="btn" style="left:1733.3px;top:64px;width:124.6px;height:30.7px"></div>
<div class="btn" style="left:1862.2px;top:64px;width:33.8px;height:30.7px"></div>
<div class="btn" style="left:1787px;top:105px;width:109px;height:30.8px"></div>
<div class="btn" style="left:1765.1px;top:144.2px;width:130.9px;height:29.5px"></div>
<div class="btn" style="left:55px;top:182.3px;width:155.7px;height:30.6px;background:#a5a9ad"></div>
<div class="btn" style="left:215px;top:182.3px;width:67px;height:30.6px"></div>
<div class="btn" style="left:11px;top:236.3px;width:56px;height:23.4px;background:#a6cdfa;border-radius:2px"></div>
<div class="btn" style="left:35.1px;top:713.4px;width:83.8px;height:30.6px"></div>
<div class="abs" style="left:636.6px;top:17.4px;width:1.6px;height:19.5px;background:#2a78b8"></div>
<div class="abs" style="left:780.8px;top:17.4px;width:1.6px;height:19.5px;background:#2a78b8"></div>
<div class="caret" style="left:318.8px;top:26.4px;border-top-color:#7d8185"></div>
<div class="caret" style="left:395.2px;top:26.4px;border-top-color:#7d8185"></div>
<div class="caret" style="left:495.6px;top:26.4px;border-top-color:#7d8185"></div>
<div class="caret" style="left:610.6px;top:26.4px;border-top-color:#7d8185"></div>
<div class="caret" style="left:1728.0px;top:26.4px;border-top-color:#222"></div>
<div class="caret" style="left:1884.7px;top:26.4px;border-top-color:#222"></div>
<div class="abs" style="left:1664px;top:12px;width:58px;height:27px;background:#fff;border-radius:8px"></div>
<div class="abs" style="left:175px;top:633.2px;width:1724px;height:27.8px;background:#ffeeba;border-bottom:1.5px solid #e0dac8"></div>
<svg class="abs" style="left:1789px;top:21.5px" width="14" height="14" viewBox="0 0 14 14"><circle cx="7" cy="7" r="5.6" fill="none" stroke="#1f2327" stroke-width="1.4"/><path d="M5.1 5.6c0-1.2.9-1.9 1.9-1.9s1.9.7 1.9 1.7c0 1.3-1.7 1.4-1.7 2.7" fill="none" stroke="#1f2327" stroke-width="1.5"/><circle cx="7.1" cy="10" r=".95" fill="#1f2327"/></svg>
<svg class="abs" style="left:1823.5px;top:21.9px" width="12.6" height="12.2" viewBox="0 0 12.6 12.2"><path d="M1 4.2V1H4.3M8.3 1H11.6V4.2M11.6 8V11.2H8.3M4.3 11.2H1V8" fill="none" stroke="#1f2327" stroke-width="2"/></svg>
<div class="abs" style="left:1856.8px;top:22.8px;width:20.4px;height:10.2px;background:linear-gradient(#b23a48 0,#b23a48 33.3%,#fff 33.3%,#fff 66.6%,#4f7358 66.6%)"></div>
<svg class="abs" style="left:1743.2px;top:73.2px" width="10.6" height="13.9" viewBox="0 0 10.6 13.9"><path d="M1.3 1.8h2.4a1.7 1.7 0 0 1 3.2 0h2.4a1.3 1.3 0 0 1 1.3 1.3v9.5a1.3 1.3 0 0 1-1.3 1.3H1.3A1.3 1.3 0 0 1 0 12.6V3.100A1.3 1.3 0 0 1 1.3 1.8z" fill="#fff"/><circle cx="5.3" cy="2" r=".7" fill="#007bff"/><path d="M4.6 6.300h1.4v1.700h1.700v1.400H6v1.700H4.600V9.400H2.900V8H4.600z" fill="#007bff"/><rect x="3" y="3.600" width="4.600" height="1" fill="#007bff"/></svg>
<svg class="abs" style="left:1872.1px;top:73.9px" width="13.8" height="13.2" viewBox="0 0 13.8 13.2"><path d="M2.700 0h6.700l1.700 1.700V5H2.700z" fill="#fff"/><rect x="4.200" y="1.500" width="5.400" height="3.500" fill="#007bff"/><path d="M1.700 4.800h10.400a1.700 1.700 0 0 1 1.700 1.700v4h-2.500V13.200H2.500V10.500H0v-4a1.700 1.700 0 0 1 1.700-1.700z" fill="#fff"/><rect x="4.200" y="9" width="5.400" height="2.700" fill="#007bff"/><circle cx="11.600" cy="6.900" r=".7" fill="#007bff"/></svg>
<svg class="abs" style="left:1797.3px;top:114.4px" width="13.6" height="13.4" viewBox="0 0 13.6 13.4"><path d="M2.200 4.300A5.300 5.300 0 1 1 2.600 9.800" fill="none" stroke="#fff" stroke-width="2.1"/><path d="M0 .9L4.700 1.200 4.300 5.800z" fill="#fff"/><path d="M7 3.600V7.100L9.200 8.800" fill="none" stroke="#fff" stroke-width="1.600"/></svg>
<svg class="abs" style="left:1775px;top:154.2px" width="13.4" height="11.8" viewBox="0 0 13.4 11.8"><rect x=".6" y=".2" width="11.400" height="2.500" rx=".4" fill="#fff"/><rect x="1.600" y="4.600" width="11.600" height="2.500" rx=".4" fill="#fff"/><rect x=".2" y="9" width="11.800" height="2.500" rx=".4" fill="#fff"/></svg>
<svg class="abs" style="left:64.9px;top:191.2px" width="13.8" height="13.4" viewBox="0 0 13.8 13.4"><path d="M0 .6A.6.600 0 0 1 .6 0H3.800a.6.600 0 0 1 .6.600V9h8.800a.6.600 0 0 1 .6.600v3.200a.6.600 0 0 1-.6.600H.6a.6.600 0 0 1-.6-.6z" fill="#fff"/><path d="M2.800 2h1.600M2.800 4h1.600M2.800 6h1.600M2.800 8h1.600M6.500 9v1.500M8.500 9v1.500M10.500 9v1.500" stroke="#a5a9ad" stroke-width=".8"/><path d="M1 12.400L4.400 9" stroke="#a5a9ad" stroke-width=".7"/></svg>
<svg class="abs" style="left:1826.8px;top:192.5px" width="13.4" height="11.4" viewBox="0 0 13.4 11.4"><path d="M6.700 1.900C5.400-.2 2.600-.5 1.100 1.100c-1.500 1.600-1.400 4 .1 5.500l5.500 4.800 5.500-4.800c1.500-1.500 1.600-3.900.1-5.500C10.800-.5 8-.2 6.700 1.900z" fill="#cb3544"/><path d="M.6 5.500h3.300l1.200-2.300 1.700 4 1.200-2.300.6.800h3.900" fill="none" stroke="#f8f9fa" stroke-width=".95"/></svg>
<svg class="abs" style="left:1868.9px;top:191.6px" width="9.4" height="13" viewBox="0 0 9.400 13"><path d="M4.700 0C5.500 2.800 9.400 5.600 9.400 8.600A4.600 4.400 0 0 1 0 8.600C0 5.600 3.900 2.800 4.700 0z" fill="#cb3544"/><path d="M2.200 9.100a2.500 2.500 0 0 0 2.500 2.200" fill="none" stroke="#f1c3c8" stroke-width=".8"/></svg>
<div class="abs" style="left:1862.9px;top:193.6px;width:1.1px;height:12px;background:#b8505a"></div>
<svg class="abs" style="left:96.6px;top:723.2px" width="12.4" height="11.6" viewBox="0 0 12.4 11.600"><path d="M0 5.800H10.800M6 .8L11 5.800 6 10.800" fill="none" stroke="#fff" stroke-width="2" stroke-linejoin="miter"/></svg>
<svg class="abs" style="left:306.5px;top:634.4px" width="11" height="10" viewBox="0 0 11 10"><path d="M2.700 9V1.200M.9 3L2.700 1 4.500 3" fill="none" stroke="#333" stroke-width="1"/><path d="M8 1V8.800M6.200 7L8 9 9.800 7" fill="none" stroke="#d6cda8" stroke-width="1"/></svg>
<svg class="abs" style="left:414.7px;top:634.4px" width="11" height="10" viewBox="0 0 11 10"><path d="M2.700 9V1.200M.9 3L2.700 1 4.500 3" fill="none" stroke="#d6cda8" stroke-width="1"/><path d="M8 1V8.800M6.200 7L8 9 9.800 7" fill="none" stroke="#d6cda8" stroke-width="1"/></svg>
<svg class="abs" style="left:522.1px;top:634.4px" width="11" height="10" viewBox="0 0 11 10"><path d="M2.700 9V1.200M.9 3L2.700 1 4.500 3" fill="none" stroke="#d6cda8" stroke-width="1"/><path d="M8 1V8.800M6.200 7L8 9 9.800 7" fill="none" stroke="#d6cda8" stroke-width="1"/></svg>
<svg class="abs" style="left:660.5px;top:634.4px" width="11" height="10" viewBox="0 0 11 10"><path d="M2.700 9V1.200M.9 3L2.700 1 4.500 3" fill="none" stroke="#d6cda8" stroke-width="1"/><path d="M8 1V8.800M6.200 7L8 9 9.800 7" fill="none" stroke="#d6cda8" stroke-width="1"/></svg>
<svg class="abs" style="left:786.1px;top:634.4px" width="11" height="10" viewBox="0 0 11 10"><path d="M2.700 9V1.200M.9 3L2.700 1 4.500 3" fill="none" stroke="#d6cda8" stroke-width="1"/><path d="M8 1V8.800M6.200 7L8 9 9.800 7" fill="none" stroke="#d6cda8" stroke-width="1"/></svg>
<svg class="abs" style="left:911.7px;top:634.4px" width="11" height="10" viewBox="0 0 11 10"><path d="M2.700 9V1.200M.9 3L2.700 1 4.500 3" fill="none" stroke="#d6cda8" stroke-width="1"/><path d="M8 1V8.800M6.200 7L8 9 9.800 7" fill="none" stroke="#d6cda8" stroke-width="1"/></svg>
<svg class="abs" style="left:1050.0px;top:634.4px" width="11" height="10" viewBox="0 0 11 10"><path d="M2.700 9V1.200M.9 3L2.700 1 4.500 3" fill="none" stroke="#d6cda8" stroke-width="1"/><path d="M8 1V8.800M6.200 7L8 9 9.800 7" fill="none" stroke="#d6cda8" stroke-width="1"/></svg>
<svg class="abs" style="left:1212.9px;top:634.4px" width="11" height="10" viewBox="0 0 11 10"><path d="M2.700 9V1.200M.9 3L2.700 1 4.500 3" fill="none" stroke="#d6cda8" stroke-width="1"/><path d="M8 1V8.800M6.200 7L8 9 9.800 7" fill="none" stroke="#d6cda8" stroke-width="1"/></svg>
<svg class="abs" style="left:1362.5px;top:634.4px" width="11" height="10" viewBox="0 0 11 10"><path d="M2.700 9V1.200M.9 3L2.700 1 4.500 3" fill="none" stroke="#d6cda8" stroke-width="1"/><path d="M8 1V8.800M6.200 7L8 9 9.800 7" fill="none" stroke="#d6cda8" stroke-width="1"/></svg>
<svg class="abs" style="left:1516.1px;top:634.4px" width="11" height="10" viewBox="0 0 11 10"><path d="M2.700 9V1.200M.9 3L2.700 1 4.500 3" fill="none" stroke="#d6cda8" stroke-width="1"/><path d="M8 1V8.800M6.200 7L8 9 9.800 7" fill="none" stroke="#d6cda8" stroke-width="1"/></svg>
<svg class="abs" style="left:1663.8px;top:634.4px" width="11" height="10" viewBox="0 0 11 10"><path d="M2.700 9V1.200M.9 3L2.700 1 4.500 3" fill="none" stroke="#d6cda8" stroke-width="1"/><path d="M8 1V8.800M6.200 7L8 9 9.800 7" fill="none" stroke="#d6cda8" stroke-width="1"/></svg>
<svg class="abs" style="left:1881.1px;top:634.4px" width="11" height="10" viewBox="0 0 11 10"><path d="M2.700 9V1.200M.9 3L2.700 1 4.500 3" fill="none" stroke="#d6cda8" stroke-width="1"/><path d="M8 1V8.800M6.200 7L8 9 9.800 7" fill="none" stroke="#d6cda8" stroke-width="1"/></svg>
<div class="abs" style="left:26.6px;top:291px;width:8px;height:228px;background:#d9d9d9"></div>
<svg class="abs" style="left:19.7px;top:280.7px" width="21.2" height="21.2" viewBox="0 0 21.2 21.2"><circle cx="10.600" cy="10.600" r="10.600" fill="#d9d9d9"/><path d="M6.100 8.900h9M6.100 12.300h9" stroke="#e6e6e6" stroke-width="1.1"/></svg>
<svg class="abs" style="left:19.7px;top:508.79999999999995px" width="21.2" height="21.2" viewBox="0 0 21.2 21.2"><circle cx="10.600" cy="10.600" r="10.600" fill="#d9d9d9"/><path d="M6.100 8.900h9M6.100 12.300h9" stroke="#e6e6e6" stroke-width="1.1"/></svg>
<svg class="abs" style="left:93.10000000000001px;top:249px" width="21.2" height="21.2" viewBox="0 0 21.2 21.2"><circle cx="10.600" cy="10.600" r="10.600" fill="#d9d9d9"/><path d="M8.900 6.600v8M12.300 6.600v8" stroke="#e6e6e6" stroke-width="1.1"/></svg>
<svg class="abs" style="left:1878.6000000000001px;top:249px" width="21.2" height="21.2" viewBox="0 0 21.2 21.2"><circle cx="10.600" cy="10.600" r="10.600" fill="#d9d9d9"/><path d="M8.900 6.600v8M12.300 6.600v8" stroke="#e6e6e6" stroke-width="1.1"/></svg>
<div class="abs" style="left:799.7px;top:585.6px;width:17.8px;height:1.9px;background:#b5245a"></div>
<div class="abs" style="left:955.4px;top:585.6px;width:18.2px;height:1.9px;background:#a9a9a9"></div>
<svg class="abs" style="left:10px;top:599px" width="46" height="14" viewBox="0 0 46 14"><path d="M1 11.700H9.500C13 11.700 14 3 17.500 3 21 3 23 11.700 27 11.700H44" fill="none" stroke="#b9b9b9" stroke-width="1.400"/><path d="M24 8.500C26 6 27 4.300 28.500 6.500 30 8.500 31 4 33 4.200 35 4.500 36.500 11.700 39 11.700" fill="none" stroke="#cfcfcf" stroke-width="1.300"/></svg>
<svg class="abs" style="left:8px;top:8px" width="74" height="34" viewBox="0 0 74 34"><rect x="0" y="9.400" width="15.800" height="8.500" fill="#e1231f"/><rect x="1.4" y="11.800" width="3" height="3.600" rx=".8" fill="none" stroke="#fff" stroke-width="1"/><rect x="6.4" y="11.800" width="3" height="3.600" rx=".8" fill="none" stroke="#fff" stroke-width="1"/><rect x="11.4" y="11.800" width="3" height="3.600" rx=".8" fill="none" stroke="#fff" stroke-width="1"/><path d="M19 9.500h7v4.500c0 2.300-2 3.700-3.500 4.300C21 17.700 19 16.300 19 14z" fill="#8a5a3c"/><path d="M20.500 10.800h4v3.200c0 1.300-1 2.200-2 2.600-1-.4-2-1.300-2-2.600z" fill="#b5413a"/><text x="29" y="17.600" font-family="Liberation Sans" font-weight="bold" font-size="10" fill="#2b2a4c" textLength="15.500" lengthAdjust="spacingAndGlyphs">bay</text><text x="47" y="17.500" font-family="Liberation Sans" font-size="8.200" fill="#444" textLength="13.400" lengthAdjust="spacingAndGlyphs">OPT</text><rect x="60.600" y="12" width="10.600" height="5.400" fill="#8cc63f"/><text x="61.400" y="17.200" font-family="Liberation Sans" font-weight="bold" font-size="6.500" fill="#e9f6d3" textLength="9" lengthAdjust="spacingAndGlyphs">IM</text><text x="0" y="32.200" font-family="Liberation Serif" font-weight="bold" font-size="7.500" fill="#111" textLength="6.500" lengthAdjust="spacingAndGlyphs">SE</text><text x="9.300" y="32.200" font-family="Liberation Sans" font-weight="bold" font-size="6" fill="#111" textLength="33.500" lengthAdjust="spacingAndGlyphs">Smarteye Kft.</text><text x="42" y="27" font-family="Liberation Sans" font-size="3.200" fill="#566" textLength="22" lengthAdjust="spacingAndGlyphs">SZÉCHENYI</text><path d="M69.300 22a3.900 3.900 0 0 1 3.900 3.900c0 2.600-2.800 4.300-3.900 6.600-1.100-2.300-3.900-4-3.900-6.600A3.900 3.900 0 0 1 69.300 22z" fill="#2a78c2"/><circle cx="69.300" cy="25.800" r="1.500" fill="#4d9be0"/></svg>
<div class="t" style="left:86.4px;top:20.2px;font-size:15.6px;color:#1f2327;transform:scaleX(0.9978)">Capno Orvosi Portál</div>
<div class="t" style="left:246.4px;top:21.9px;font-size:13px;color:#7d8185;transform:scaleX(0.9947)">Vizsgálatok</div>
<div class="t" style="left:338.1px;top:21.9px;font-size:13px;color:#7d8185;transform:scaleX(1.0068)">Mérések</div>
<div class="t" style="left:414.2px;top:21.9px;font-size:13px;color:#7d8185;transform:scaleX(0.9995)">Karbantartás</div>
<div class="t" style="left:515.4px;top:21.9px;font-size:13px;color:#7d8185;transform:scaleX(0.9654)">Fejlesztői menü</div>
<div class="t" style="left:650.8px;top:21.8px;font-size:13px;color:#1b73c7;transform:scaleX(0.9466);font-weight:bold">Mérés visszanézése</div>
<div class="t" style="left:1580.0px;top:21.6px;font-size:13px;color:#1f2327;transform:scaleX(0.9712)">Belépve, mint:</div>
<div class="t" style="left:1756.0px;top:21.6px;font-size:13px;color:#1f2327;transform:scaleX(0.9449)">Súgó</div>
<div class="t" style="left:12.5px;top:72.0px;font-size:13px;color:#856404;transform:scaleX(0.9162);font-weight:bold">Páciens:</div>
<div class="t" style="left:78.3px;top:73.8px;font-size:13px;color:#444;transform:scaleX(0.9197)">NOTPAC - NOTPAC</div>
<div class="t" style="left:489.5px;top:72.2px;font-size:13px;color:#856404;transform:scaleX(1.0008);font-weight:bold">Mérés időpontja:</div>
<div class="t" style="left:610.3px;top:73.7px;font-size:13px;color:#444;transform:scaleX(0.9758)">2020-03-11 14:12:19 (A)</div>
<div class="t" style="left:1125.2px;top:73.3px;font-size:13px;color:#856404;transform:scaleX(0.9617);font-weight:bold">Orvos:</div>
<div class="t" style="left:1363.4px;top:73.3px;font-size:13px;color:#856404;transform:scaleX(0.9429);font-weight:bold">Eszköz ID:</div>
<div class="t" style="left:1757.6px;top:73.6px;font-size:13px;color:#ffffff;transform:scaleX(1.0314)">További adatok</div>
<div class="t" style="left:12.2px;top:114.6px;font-size:13px;color:#212529;transform:scaleX(0.9714);font-weight:bold">Születési idő:</div>
<div class="t" style="left:99.0px;top:114.6px;font-size:13px;color:#212529;transform:scaleX(0.9245)">1990.01.01.</div>
<div class="t" style="left:330.5px;top:114.7px;font-size:13px;color:#212529;transform:scaleX(0.9689);font-weight:bold">Életkor:</div>
<div class="t" style="left:382.4px;top:114.7px;font-size:13px;color:#212529;transform:scaleX(0.9619)">34 év</div>
<div class="t" style="left:648.5px;top:114.7px;font-size:13px;color:#212529;transform:scaleX(0.9786);font-weight:bold">Neme:</div>
<div class="t" style="left:692.5px;top:114.7px;font-size:13px;color:#212529;transform:scaleX(0.9423)">Férfi</div>
<div class="t" style="left:966.0px;top:114.7px;font-size:13px;color:#212529;transform:scaleX(0.9588);font-weight:bold">Testsúly:</div>
<div class="t" style="left:1284.0px;top:114.7px;font-size:13px;color:#212529;transform:scaleX(0.9574);font-weight:bold">Testmagasság:</div>
<div class="t" style="left:1818.2px;top:114.9px;font-size:13px;color:#ffffff;transform:scaleX(1.0353)">Kórtörténet</div>
<div class="t" style="left:12.5px;top:153.4px;font-size:13px;color:#004085;transform:scaleX(0.9751);font-weight:bold">Diagnózis:</div>
<div class="t" style="left:1792.8px;top:154.0px;font-size:13px;color:#ffffff;transform:scaleX(0.9572)">Összehasonlítás</div>
<div class="t" style="left:14.2px;top:186.9px;font-size:15.6px;color:#2f7fc1;transform:scaleX(0.8652)">TCap</div>
<div class="t" style="left:82.3px;top:192.1px;font-size:13px;color:#ffffff;transform:scaleX(1.0036)">Volumetrikus adatok</div>
<div class="t" style="left:225.8px;top:192.1px;font-size:13px;color:#ffffff;transform:scaleX(0.9702)">Wavelet</div>
<div class="t" style="left:1844.4px;top:191.8px;font-size:13px;color:#c8343f;transform:scaleX(0.8916);font-weight:bold">84</div>
<div class="t" style="left:1882.2px;top:191.8px;font-size:13px;color:#c8343f;transform:scaleX(0.9192);font-weight:bold">97</div>
<div class="t" style="left:20.2px;top:242.9px;font-size:12px;color:#ffffff;transform:scaleX(1.0868)">Export</div>
<div class="t" style="left:58.7px;top:628.5px;font-size:15.6px;color:#212529;transform:scaleX(1.0156)">Átlag</div>
<div class="t" style="left:21.0px;top:679.4px;font-size:13px;color:#444;transform:scaleX(0.9421)">V.2.6.0</div>
<div class="t" style="left:46.1px;top:723.0px;font-size:13px;color:#ffffff;transform:scaleX(0.9366)">Elemzés</div>
<div class="t" style="left:986.3px;top:553.9px;font-size:13px;color:#222;transform:scaleX(0.9846)">Idő</div>
<div class="t" style="left:822.1px;top:580.0px;font-size:13px;color:#222;transform:scaleX(0.9945)">Main Stream</div>
<div class="t" style="left:978.4px;top:580.0px;font-size:13px;color:#a9a9a9;transform:scaleX(0.9644)">Side Stream</div>
<div class="t" style="left:203.1px;top:642.0px;font-size:13.5px;color:#212529;transform:scaleX(0.9178);font-weight:bold">Jó ciklus/összes</div>
<div class="t" style="left:386.2px;top:642.0px;font-size:13.5px;color:#212529;transform:scaleX(0.8479);font-weight:bold">S2T</div>
<div class="t" style="left:494.0px;top:642.0px;font-size:13.5px;color:#212529;transform:scaleX(0.8479);font-weight:bold">S3T</div>
<div class="t" style="left:585.8px;top:642.0px;font-size:13.5px;color:#212529;transform:scaleX(0.9347);font-weight:bold">Alpha Szög</div>
<div class="t" style="left:749.7px;top:642.0px;font-size:13.5px;color:#212529;transform:scaleX(0.8814);font-weight:bold">Sn2T</div>
<div class="t" style="left:876.1px;top:642.0px;font-size:13.5px;color:#212529;transform:scaleX(0.8814);font-weight:bold">Sn3T</div>
<div class="t" style="left:978.2px;top:642.0px;font-size:13.5px;color:#212529;transform:scaleX(0.9331);font-weight:bold">Sn3T/Sn2T</div>
<div class="t" style="left:1122.2px;top:642.0px;font-size:13.5px;color:#212529;transform:scaleX(0.9652);font-weight:bold">Területi arány</div>
<div class="t" style="left:1315.6px;top:642.0px;font-size:13.5px;color:#212529;transform:scaleX(0.9926);font-weight:bold">D2Min</div>
<div class="t" style="left:1467.7px;top:642.0px;font-size:13.5px;color:#212529;transform:scaleX(0.9717);font-weight:bold">D2Max</div>
<div class="t" style="left:1577.2px;top:642.0px;font-size:13.5px;color:#212529;transform:scaleX(0.8797);font-weight:bold">ETCO2</div>
<div class="t" style="left:1744.0px;top:642.0px;font-size:13.5px;color:#212529;transform:scaleX(0.8963);font-weight:bold">Légzésszám</div>
<div class="t" style="left:288.4px;top:669.0px;font-size:13px;color:#212529;transform:scaleX(1.0016)">25/29</div>
<div class="t" style="left:392.2px;top:669.0px;font-size:13px;color:#212529;transform:scaleX(0.9204)">136,39</div>
<div class="t" style="left:513.0px;top:669.0px;font-size:13px;color:#212529;transform:scaleX(0.9323)">2,38</div>
<div class="t" style="left:638.4px;top:669.0px;font-size:13px;color:#212529;transform:scaleX(0.9330)">106,38</div>
<div class="t" style="left:776.8px;top:669.0px;font-size:13px;color:#212529;transform:scaleX(0.9323)">4,42</div>
<div class="t" style="left:902.2px;top:669.0px;font-size:13px;color:#212529;transform:scaleX(0.9323)">0,08</div>
<div class="t" style="left:1034.1px;top:669.0px;font-size:13px;color:#212529;transform:scaleX(0.9402)">18,69</div>
<div class="t" style="left:1196.0px;top:669.0px;font-size:13px;color:#212529;transform:scaleX(0.9371)">86,36</div>
<div class="t" style="left:1342.0px;top:669.0px;font-size:13px;color:#212529;transform:scaleX(0.9383)">-41,70</div>
<div class="t" style="left:1499.8px;top:669.0px;font-size:13px;color:#212529;transform:scaleX(0.9371)">33,52</div>
<div class="t" style="left:1592.4px;top:669.0px;font-size:13px;color:#212529;transform:scaleX(0.9402)">31,00</div>
<div class="t" style="left:1775.6px;top:669.0px;font-size:13px;color:#212529;transform:scaleX(0.9217)">13,68</div>
<div class="t" style="left:90.4px;top:528.9px;font-size:13px;color:#222;transform:scaleX(0.9165)">0:00</div>
<div class="t" style="left:237.4px;top:528.9px;font-size:13px;color:#222;transform:scaleX(0.9165)">0:10</div>
<div class="t" style="left:237.4px;top:220.3px;font-size:13px;color:#7a7a7a;transform:scaleX(0.9165)">0:10</div>
<div class="t" style="left:383.8px;top:528.9px;font-size:13px;color:#222;transform:scaleX(0.9165)">0:20</div>
<div class="t" style="left:383.8px;top:220.3px;font-size:13px;color:#7a7a7a;transform:scaleX(0.9165)">0:20</div>
<div class="t" style="left:530.2px;top:528.9px;font-size:13px;color:#222;transform:scaleX(0.9165)">0:30</div>
<div class="t" style="left:530.2px;top:220.3px;font-size:13px;color:#7a7a7a;transform:scaleX(0.9165)">0:30</div>
<div class="t" style="left:676.6px;top:528.9px;font-size:13px;color:#222;transform:scaleX(0.9165)">0:40</div>
<div class="t" style="left:676.6px;top:220.3px;font-size:13px;color:#7a7a7a;transform:scaleX(0.9165)">0:40</div>
<div class="t" style="left:823.0px;top:528.9px;font-size:13px;color:#222;transform:scaleX(0.9165)">0:50</div>
<div class="t" style="left:823.0px;top:220.3px;font-size:13px;color:#7a7a7a;transform:scaleX(0.9165)">0:50</div>
<div class="t" style="left:969.4px;top:528.9px;font-size:13px;color:#222;transform:scaleX(0.9165)">1:00</div>
<div class="t" style="left:969.4px;top:220.3px;font-size:13px;color:#7a7a7a;transform:scaleX(0.9165)">1:00</div>
<div class="t" style="left:1115.8px;top:528.9px;font-size:13px;color:#222;transform:scaleX(0.9165)">1:10</div>
<div class="t" style="left:1115.8px;top:220.3px;font-size:13px;color:#7a7a7a;transform:scaleX(0.9165)">1:10</div>
<div class="t" style="left:1262.2px;top:528.9px;font-size:13px;color:#222;transform:scaleX(0.9165)">1:20</div>
<div class="t" style="left:1262.2px;top:220.3px;font-size:13px;color:#7a7a7a;transform:scaleX(0.9165)">1:20</div>
<div class="t" style="left:1408.6px;top:528.9px;font-size:13px;color:#222;transform:scaleX(0.9165)">1:30</div>
<div class="t" style="left:1408.6px;top:220.3px;font-size:13px;color:#7a7a7a;transform:scaleX(0.9165)">1:30</div>
<div class="t" style="left:1555.0px;top:528.9px;font-size:13px;color:#222;transform:scaleX(0.9165)">1:40</div>
<div class="t" style="left:1555.0px;top:220.3px;font-size:13px;color:#7a7a7a;transform:scaleX(0.9165)">1:40</div>
<div class="t" style="left:1701.4px;top:528.9px;font-size:13px;color:#222;transform:scaleX(0.9165)">1:50</div>
<div class="t" style="left:1701.4px;top:220.3px;font-size:13px;color:#7a7a7a;transform:scaleX(0.9165)">1:50</div>
<div class="t" style="left:1847.8px;top:528.9px;font-size:13px;color:#222;transform:scaleX(0.9165)">2:00</div>
<div class="t" style="left:78.2px;top:286.3px;font-size:12.5px;color:#8e1a4c;transform:scaleX(1.0067);font-weight:bold">40</div>
<div class="t" style="left:78.2px;top:343.0px;font-size:12.5px;color:#8e1a4c;transform:scaleX(1.0067);font-weight:bold">30</div>
<div class="t" style="left:78.2px;top:399.7px;font-size:12.5px;color:#8e1a4c;transform:scaleX(1.0067);font-weight:bold">20</div>
<div class="t" style="left:78.2px;top:456.5px;font-size:12.5px;color:#8e1a4c;transform:scaleX(1.0067);font-weight:bold">10</div>
<div class="t" style="left:85.4px;top:513.3px;font-size:12.5px;color:#8e1a4c;transform:scaleX(0.9780);font-weight:bold">0</div>
<div class="t" style="left:0;top:0;font-size:12.5px;font-weight:bold;color:#a31a5a;transform:translate(45.8px,448.2px) rotate(-90deg) scaleX(0.9677)">PCO2 (Hgmm)</div>
</body>
</html>
